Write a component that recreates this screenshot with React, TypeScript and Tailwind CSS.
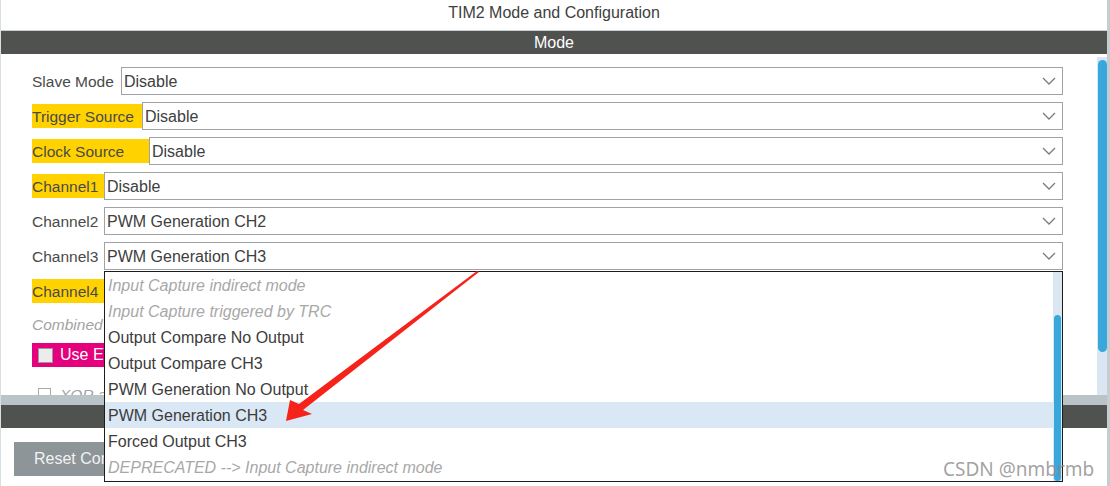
import React from "react";

const ROWS = [
  { label: "Slave Mode", value: "Disable", w: "w-[89px]", hl: false },
  { label: "Trigger Source", value: "Disable", w: "w-[110px]", hl: true },
  { label: "Clock Source", value: "Disable", w: "w-[117px]", hl: true },
  { label: "Channel1", value: "Disable", w: "w-[72px]", hl: true },
  { label: "Channel2", value: "PWM Generation CH2", w: "w-[72px]", hl: false },
  { label: "Channel3", value: "PWM Generation CH3", w: "w-[72px]", hl: false },
  { label: "Channel4", value: "", w: "w-[72px]", hl: true },
];

const OPTIONS = [
  { text: "Input Capture indirect mode", off: true },
  { text: "Input Capture triggered by TRC", off: true },
  { text: "Output Compare No Output", off: false },
  { text: "Output Compare CH3", off: false },
  { text: "PWM Generation No Output", off: false },
  { text: "PWM Generation CH3", off: false, active: true },
  { text: "Forced Output CH3", off: false },
  { text: "DEPRECATED --> Input Capture indirect mode", off: true },
];

function Chevron() {
  return (
    <svg width="14" height="8" viewBox="0 0 14 8" className="shrink-0">
      <path d="M1 1 L7 7 L13 1" fill="none" stroke="#7b7b7b" strokeWidth="1.3" />
    </svg>
  );
}

function Row({ label, value, w, hl }: { label: string; value: string; w: string; hl: boolean }) {
  return (
    <div className="flex h-[28px] items-center">
      <div className={`${w} h-[24px] shrink-0 pt-[1px] leading-[24px] whitespace-nowrap ${hl ? "bg-[#ffd200]" : ""}`}>{label}</div>
      <div className="flex h-[28px] flex-1 items-center justify-between border border-[#a0a3a5] pl-[2px] pr-[6px]">
        <span className="pt-[1px] text-[16px] text-[#404040]">{value}</span>
        <Chevron />
      </div>
    </div>
  );
}

export default function App() {
  return (
    <div className="relative h-[486px] w-[1110px] overflow-hidden border-l border-r-[3px] border-l-[#d8dfe3] border-r-[#c5cdd1] bg-white font-['Liberation_Sans',Arial,sans-serif] text-[15.5px] text-[#4a4a4a]">
      <div className="flex h-[30px] items-center justify-center pb-[4px] text-[16px] text-[#404040]">TIM2 Mode and Configuration</div>
      <div className="flex h-[24px] items-center justify-center border-t border-[#c9d0d4] bg-[#505250] text-[16px] text-white">Mode</div>

      <div className="flex h-[341px]">
        <div className="flex flex-1 flex-col gap-[7px] overflow-hidden pl-[31px] pr-[34px] pt-[13px]">
          {ROWS.map((r) => (
            <Row key={r.label} {...r} />
          ))}
          <div className="flex h-[28px] items-center pt-[1px] italic text-[#a3a3a3]">Combined Channels</div>
          <div className="flex h-[28px] w-[400px] items-center gap-[7px] bg-[#e5007e] pl-[6px] text-[16px] text-white">
            <span className="h-[15px] w-[15px] border border-[#9a9a9a] bg-[#ececec]" />
            <span>Use ETR2 as Clearing Source</span>
          </div>
          <div className="mt-[6px] flex h-[28px] shrink-0 items-center gap-[9px] pl-[6px] italic text-[#a3a3a3]">
            <span className="h-[13px] w-[13px] border border-[#a8a8a8] bg-white" />
            <span>XOR activation</span>
          </div>
        </div>
        <div className="w-[10px] bg-white pt-[3px]">
          <div className="h-full bg-[#dae7f3] pt-[3px]">
            <div className="mx-auto h-[292px] w-[9px] rounded-full bg-[#38a7dc]" />
          </div>
        </div>
      </div>

      <div className="h-[10px] bg-[#b9c3c8]" />
      <div className="h-[23px] bg-[#505250]" />
      <div className="pl-[13px] pt-[14px]">
        <div className="flex h-[34px] w-[260px] items-center bg-[#8d9599] pl-[20px] text-[16px] text-[#f2f2f2]">Reset Configuration</div>
      </div>

      {/* open dropdown of Channel3 */}
      <div className="absolute left-[103px] top-[271px] flex h-[211px] w-[959px] border border-[#1c1c1c] bg-white text-[16px]">
        <div className="flex flex-1 flex-col">
          {OPTIONS.map((o) => (
            <div
              key={o.text}
              className={`flex h-[26px] items-center pl-[3px] pt-[1px] whitespace-nowrap ${o.off ? "italic text-[#a8a8a8]" : "text-[#3c3c3c]"} ${o.active ? "bg-[#dae8f5]" : ""}`}
            >
              {o.text}
            </div>
          ))}
        </div>
        <div className="w-[9px] bg-[#dae7f3] pt-[43px]">
          <div className="mx-auto h-full w-[7px] rounded-full bg-[#38a7dc]" />
        </div>
      </div>

      <div className="pointer-events-none absolute left-[942px] top-[456px] font-['Noto_Sans',sans-serif] text-[19px] leading-[26px] text-[#8a8a8a]/80">CSDN @nmbrmb</div>

      <svg className="pointer-events-none absolute left-0 top-0" width="1110" height="486">
        <polygon points="478,272 476,271 298,404 289,400 285,421 311,414 302,410" fill="#f5231a" />
      </svg>
    </div>
  );
}
